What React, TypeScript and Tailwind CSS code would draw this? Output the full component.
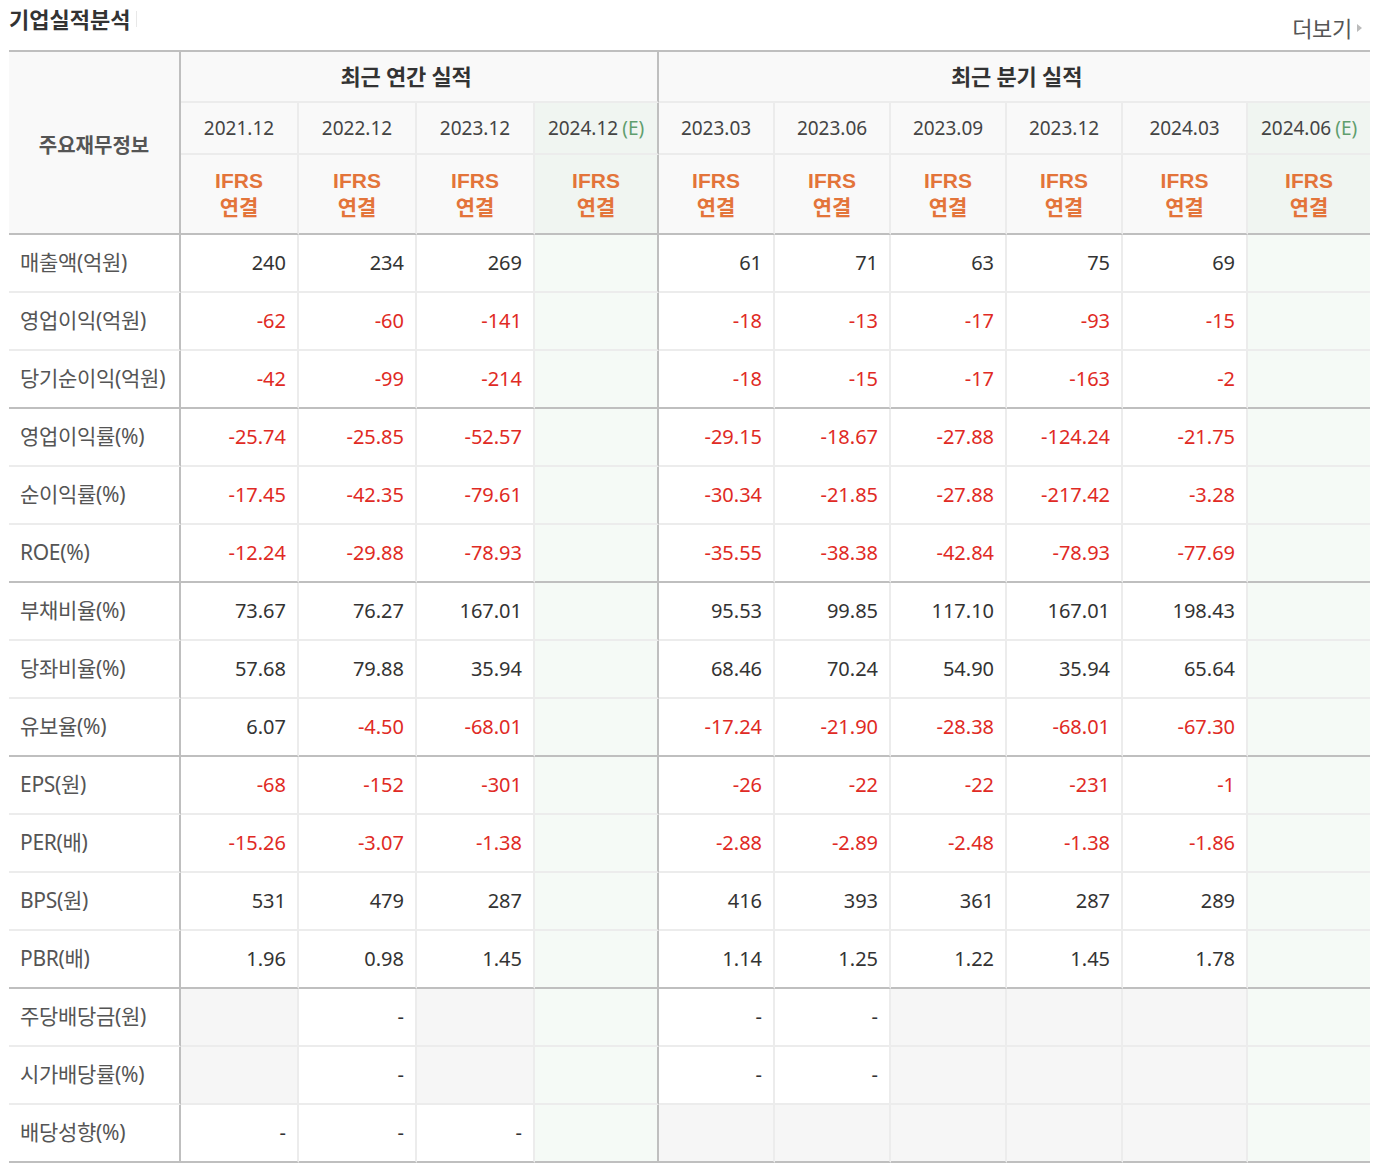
import React from 'react';

type Cell = string | null;
type Row = { label: string; a: Cell[]; q: Cell[]; groupEnd?: boolean };

const annualCols = ['2021.12', '2022.12', '2023.12', '2024.12'];
const quarterCols = ['2023.03', '2023.06', '2023.09', '2023.12', '2024.03', '2024.06'];
const annualW = ['w-[118px]', 'w-[118px]', 'w-[118px]', 'w-[124px]'];
const quarterW = ['w-[116px]', 'w-[116px]', 'w-[116px]', 'w-[116px]', 'w-[125px]', 'w-[122px]'];

const rows: Row[] = [
  { label: '매출액(억원)', a: ['240', '234', '269', ''], q: ['61', '71', '63', '75', '69', ''] },
  { label: '영업이익(억원)', a: ['-62', '-60', '-141', ''], q: ['-18', '-13', '-17', '-93', '-15', ''] },
  { label: '당기순이익(억원)', a: ['-42', '-99', '-214', ''], q: ['-18', '-15', '-17', '-163', '-2', ''], groupEnd: true },
  { label: '영업이익률(%)', a: ['-25.74', '-25.85', '-52.57', ''], q: ['-29.15', '-18.67', '-27.88', '-124.24', '-21.75', ''] },
  { label: '순이익률(%)', a: ['-17.45', '-42.35', '-79.61', ''], q: ['-30.34', '-21.85', '-27.88', '-217.42', '-3.28', ''] },
  { label: 'ROE(%)', a: ['-12.24', '-29.88', '-78.93', ''], q: ['-35.55', '-38.38', '-42.84', '-78.93', '-77.69', ''], groupEnd: true },
  { label: '부채비율(%)', a: ['73.67', '76.27', '167.01', ''], q: ['95.53', '99.85', '117.10', '167.01', '198.43', ''] },
  { label: '당좌비율(%)', a: ['57.68', '79.88', '35.94', ''], q: ['68.46', '70.24', '54.90', '35.94', '65.64', ''] },
  { label: '유보율(%)', a: ['6.07', '-4.50', '-68.01', ''], q: ['-17.24', '-21.90', '-28.38', '-68.01', '-67.30', ''], groupEnd: true },
  { label: 'EPS(원)', a: ['-68', '-152', '-301', ''], q: ['-26', '-22', '-22', '-231', '-1', ''] },
  { label: 'PER(배)', a: ['-15.26', '-3.07', '-1.38', ''], q: ['-2.88', '-2.89', '-2.48', '-1.38', '-1.86', ''] },
  { label: 'BPS(원)', a: ['531', '479', '287', ''], q: ['416', '393', '361', '287', '289', ''] },
  { label: 'PBR(배)', a: ['1.96', '0.98', '1.45', ''], q: ['1.14', '1.25', '1.22', '1.45', '1.78', ''], groupEnd: true },
  { label: '주당배당금(원)', a: [null, '-', null, ''], q: ['-', '-', null, null, null, ''] },
  { label: '시가배당률(%)', a: [null, '-', null, ''], q: ['-', '-', null, null, null, ''] },
  { label: '배당성향(%)', a: ['-', '-', '-', ''], q: [null, null, null, null, null, ''], groupEnd: true },
];

function ValueCell({ v, est, last, thickRight, bottomThick }: { v: Cell; est: boolean; last?: boolean; thickRight?: boolean; bottomThick?: boolean }) {
  const red = v !== null && v.startsWith('-') && v.length > 1;
  const bg = est ? 'bg-[#f5faf6]' : v === null ? 'bg-[#f6f6f6]' : 'bg-white';
  return (
    <td
      className={`h-[58px] p-0 pr-[11px] text-right align-middle text-[20px] ${bg} ${
        bottomThick ? 'border-b-2 border-b-[#bfbfbf]' : 'border-b-2 border-b-[#ececec]'
      } ${last ? '' : thickRight ? 'border-r-2 border-r-[#bfbfbf]' : 'border-r-2 border-r-[#ececec]'} ${
        red ? 'text-[#e02a24]' : 'text-[#333]'
      }`}
    >
      {v}
    </td>
  );
}

function DateHead({ d, est, last, thickRight, w }: { d: string; est: boolean; last?: boolean; thickRight?: boolean; w: string }) {
  return (
    <td
      className={`${w} h-[52px] p-0 text-center align-middle text-[19px] text-[#444] border-b-2 border-b-[#ececec] ${
        est ? 'bg-[#f0f5f1]' : 'bg-[#f9f9f9]'
      } ${last ? '' : thickRight ? 'border-r-2 border-r-[#bfbfbf]' : 'border-r-2 border-r-[#ececec]'}`}
    >
      {d}
      {est && <span className="ml-[4px] text-[#5f9e6e]">(E)</span>}
    </td>
  );
}

function IfrsHead({ est, last, thickRight }: { est: boolean; last?: boolean; thickRight?: boolean }) {
  return (
    <td
      className={`h-[80px] p-0 text-center align-middle border-b-2 border-b-[#bfbfbf] ${
        est ? 'bg-[#f0f5f1]' : 'bg-[#f9f9f9]'
      } ${last ? '' : thickRight ? 'border-r-2 border-r-[#bfbfbf]' : 'border-r-2 border-r-[#ececec]'}`}
    >
      <div className="font-bold leading-[26px] text-[#e3743a]">
        <div className="text-[21px]" style={{ fontFamily: '"Liberation Sans", Arial, sans-serif' }}>
          IFRS
        </div>
        <div className="text-[21px]">연결</div>
      </div>
    </td>
  );
}

export default function App() {
  return (
    <div
      className="w-[1378px] bg-white pl-[9px] pb-[13px]"
      style={{ fontFamily: '"Noto Sans", "Noto Sans CJK KR", sans-serif' }}
    >
      <div className="flex h-[50px] w-[1361px] items-start justify-between">
        <div className="mt-[4px] flex items-center">
          <h2 className="text-[22px] font-bold leading-[30px] text-[#333]">기업실적분석</h2>
          <span className="ml-[6px] h-[16px] w-px bg-[#e8e8e8]" />
        </div>
        <a className="mt-[13px] mr-[8px] flex items-center text-[22px] leading-[30px] tracking-[-0.3px] text-[#555]">
          더보기
          <span className="ml-[5px] h-0 w-0 border-y-[4px] border-l-[5px] border-y-transparent border-l-[#bbb]" />
        </a>
      </div>

      <table className="w-[1361px] table-fixed border-separate border-spacing-0">
        <colgroup>
          <col className="w-[172px]" />
          {annualW.map((w, i) => (
            <col key={'a' + i} className={w} />
          ))}
          {quarterW.map((w, i) => (
            <col key={'q' + i} className={w} />
          ))}
        </colgroup>
        <thead>
          <tr>
            <th
              rowSpan={3}
              className="p-0 pt-[7px] bg-[#f9f9f9] text-center align-middle text-[20px] font-bold text-[#555] border-t-2 border-t-[#bfbfbf] border-b-2 border-b-[#bfbfbf] border-r-2 border-r-[#bfbfbf]"
            >
              주요재무정보
            </th>
            <th
              colSpan={4}
              className="h-[53px] p-0 pr-[26px] bg-[#f9f9f9] text-center align-middle text-[22px] font-bold tracking-[-0.2px] text-[#333] border-t-2 border-t-[#bfbfbf] border-b-2 border-b-[#ececec] border-r-2 border-r-[#bfbfbf]"
            >
              최근 연간 실적
            </th>
            <th
              colSpan={6}
              className="h-[53px] p-0 pl-[4px] bg-[#f9f9f9] text-center align-middle text-[22px] font-bold tracking-[-0.2px] text-[#333] border-t-2 border-t-[#bfbfbf] border-b-2 border-b-[#ececec]"
            >
              최근 분기 실적
            </th>
          </tr>
          <tr>
            {annualCols.map((d, i) => (
              <DateHead key={d} d={d} w={annualW[i]} est={i === 3} thickRight={i === 3} />
            ))}
            {quarterCols.map((d, i) => (
              <DateHead key={'q' + d} d={d} w={quarterW[i]} est={i === 5} last={i === 5} />
            ))}
          </tr>
          <tr>
            {annualCols.map((d, i) => (
              <IfrsHead key={d} est={i === 3} thickRight={i === 3} />
            ))}
            {quarterCols.map((d, i) => (
              <IfrsHead key={'q' + d} est={i === 5} last={i === 5} />
            ))}
          </tr>
        </thead>
        <tbody>
          {rows.map((r) => (
            <tr key={r.label}>
              <th
                className={`h-[58px] p-0 pl-[11px] text-left align-middle text-[21px] font-normal tracking-[-0.3px] text-[#555] bg-white border-r-2 border-r-[#bfbfbf] ${
                  r.groupEnd ? 'border-b-2 border-b-[#bfbfbf]' : 'border-b-2 border-b-[#ececec]'
                }`}
              >
                {r.label}
              </th>
              {r.a.map((v, i) => (
                <ValueCell key={'a' + i} v={v} est={i === 3} thickRight={i === 3} bottomThick={r.groupEnd} />
              ))}
              {r.q.map((v, i) => (
                <ValueCell key={'q' + i} v={v} est={i === 5} last={i === 5} bottomThick={r.groupEnd} />
              ))}
            </tr>
          ))}
        </tbody>
      </table>
    </div>
  );
}
